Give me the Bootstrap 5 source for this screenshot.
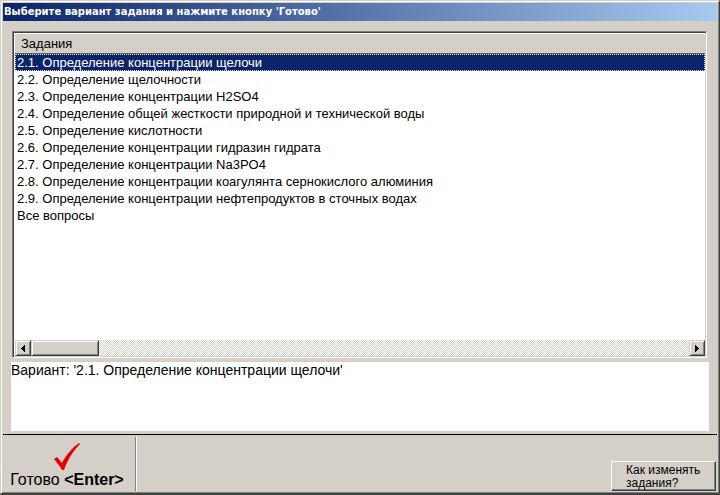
<!DOCTYPE html>
<html lang="ru">
<head>
<meta charset="utf-8">
<meta name="viewport" content="width=device-width, initial-scale=1">
<title>Выбор варианта задания</title>
<link href="https://cdn.jsdelivr.net/npm/bootstrap@5.3.0/dist/css/bootstrap.min.css" rel="stylesheet">
<style>
:root { --face: #d4d0c8; --navy: #0a246a; --shade: #808080; --dark: #404040; }
body { background: var(--face); color: #000; font: 13px/17px "Liberation Sans", Arial, sans-serif; }
.dialog-window { border: 1px solid var(--face); border-right-color: var(--dark); border-bottom: 2px solid var(--dark); box-shadow: inset 1px 1px #fff, inset -1px -1px var(--shade); padding: 2px 2px 1px; }
.title-bar { background: linear-gradient(90deg, var(--navy), #a6caf0); color: #fff; font: bold 10px/18px "DejaVu Sans", sans-serif; height: 18px; padding-left: 1px; }
.task-list { margin: 10px 10px 0 9px; border: 1px solid; border-color: var(--shade) #fff #fff var(--shade); box-shadow: inset 1px 1px var(--dark), inset -1px -1px var(--face); padding: 2px 1px 1px 2px; background: #fff; }
.task-table { border-collapse: separate; border-spacing: 0; }
.task-table th { background: var(--face); font-weight: 400; height: 20px; padding: 1px 0 1px 6px; line-height: 17px; border-bottom: 1px solid #606060; }
.task-table td { height: 17px; padding: 0 2px; }
.task-table .chosen td { background: var(--navy); color: #fff; outline: 1px dotted #e8e0c0; outline-offset: -1px; }
.scroll-track { height: 16px; background: repeating-conic-gradient(#fff 0 25%, var(--face) 0 50%) 0 0 / 2px 2px; }
.bevel { background: var(--face); border: 1px solid; border-color: var(--face) var(--dark) var(--dark) var(--face); box-shadow: inset 1px 1px #fff, inset -1px -1px var(--shade); color: #000; padding: 0; }
.scroll-arrow { width: 16px; }
.scroll-thumb { width: 68px; }
.variant-note { margin: 4px 8px 0 8px; border: 0; height: 69px; padding: 0; background: #fff; resize: none; font-size: 14px; line-height: 17px; color: #000; }
.action-bar { margin-top: 3px; border-top: 1px solid #000; padding: 2px 1px 1px 0; }
.ready-button { width: 133px; background: none; border: 0; border-right: 1px solid var(--shade); box-shadow: 1px 0 #fff; height: 54px; padding: 6px 4px 0 0; font-size: 16px; line-height: 18px; color: #000; }
.help-button { width: 105px; height: 30px; padding: 2px 0 0 14px; border-color: #fff var(--dark) var(--dark) #fff; box-shadow: inset -1px -1px var(--shade); font-size: 12px; line-height: 13px; }
</style>
<script src="https://cdn.jsdelivr.net/npm/bootstrap@5.3.0/dist/js/bootstrap.bundle.min.js"></script>
</head>
<body>
<main class="dialog-window d-flex flex-column min-vh-100">
  <header class="title-bar text-nowrap overflow-hidden">Выберите вариант задания и нажмите кнопку 'Готово'</header>
  <section class="task-list d-flex flex-column flex-grow-1">
    <table class="task-table w-100">
      <thead><tr><th scope="col">Задания</th></tr></thead>
      <tbody>
        <tr class="chosen" aria-selected="true"><td>2.1. Определение концентрации щелочи</td></tr>
        <tr><td>2.2. Определение щелочности</td></tr>
        <tr><td>2.3. Определение концентрации H2SO4</td></tr>
        <tr><td>2.4. Определение общей жесткости природной и технической воды</td></tr>
        <tr><td>2.5. Определение кислотности</td></tr>
        <tr><td>2.6. Определение концентрации гидразин гидрата</td></tr>
        <tr><td>2.7. Определение концентрации Na3PO4</td></tr>
        <tr><td>2.8. Определение концентрации коагулянта сернокислого алюминия</td></tr>
        <tr><td>2.9. Определение концентрации нефтепродуктов в сточных водах</td></tr>
        <tr><td>Все вопросы</td></tr>
      </tbody>
    </table>
    <div class="scroll-track d-flex mt-auto">
      <button type="button" class="bevel scroll-arrow d-flex align-items-center justify-content-center" aria-label="Прокрутить влево"><svg width="4" height="7" viewBox="0 0 4 7" shape-rendering="crispEdges"><path d="M4 0v7L0 3.5z"/></svg></button>
      <div class="bevel scroll-thumb"></div>
      <button type="button" class="bevel scroll-arrow ms-auto d-flex align-items-center justify-content-center" aria-label="Прокрутить вправо"><svg width="4" height="7" viewBox="0 0 4 7" shape-rendering="crispEdges"><path d="M0 0v7l4-3.5z"/></svg></button>
    </div>
  </section>
  <textarea class="variant-note" readonly aria-label="Выбранный вариант">Вариант: '2.1. Определение концентрации щелочи'</textarea>
  <footer class="action-bar d-flex justify-content-between align-items-end">
    <button type="submit" class="ready-button d-flex flex-column align-items-center">
      <svg width="26" height="28" viewBox="0 0 26 28" aria-hidden="true"><path fill="#e80000" d="M0 16l3-2 5 6C12 12 18 5 25 0l1 1C19 8 14 16 10 27H8C6 23 3 20 0 16z"/></svg>
      <span class="text-nowrap">Готово <b>&lt;Enter&gt;</b></span>
    </button>
    <button type="button" class="bevel help-button text-start">Как изменять<br>задания?</button>
  </footer>
</main>
</body>
</html>
